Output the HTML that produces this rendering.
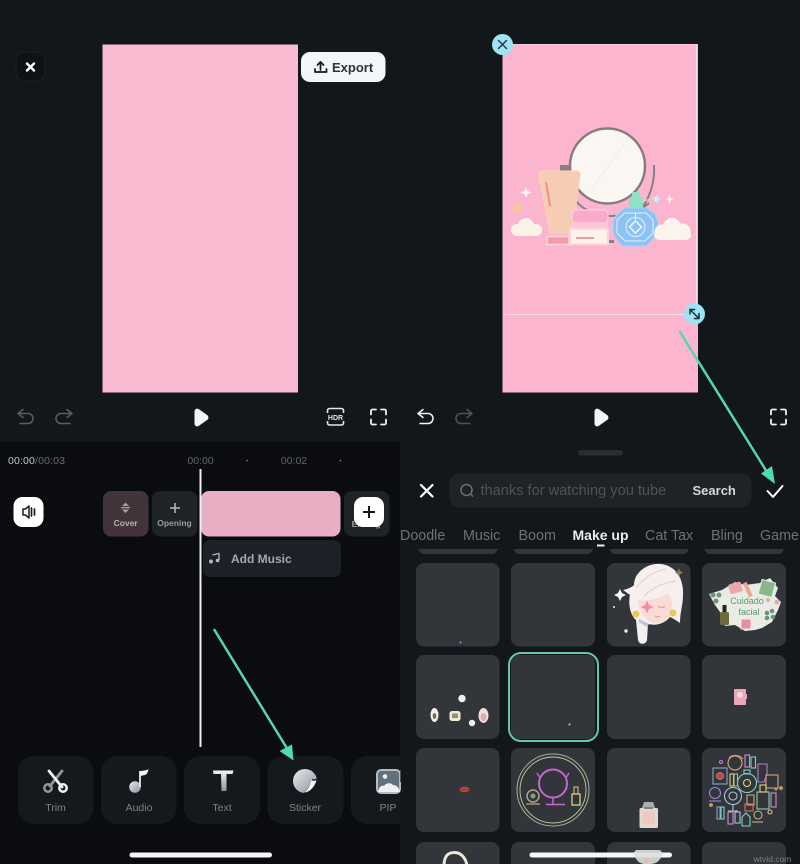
<!DOCTYPE html>
<html>
<head>
<meta charset="utf-8">
<style>
html,body{margin:0;padding:0;background:#12171b;width:800px;height:864px;overflow:hidden}
svg{display:block;position:absolute;left:0;top:0}
text{font-family:"Liberation Sans",sans-serif}
</style>
</head>
<body>
<svg width="800" height="864" viewBox="0 0 800 864" xmlns="http://www.w3.org/2000/svg">
<defs>
<linearGradient id="g1" x1="0" y1="0" x2="1" y2="1"><stop offset="0" stop-color="#e8ebee"/><stop offset="1" stop-color="#8b949c"/></linearGradient>
<linearGradient id="g2" x1="0" y1="0" x2="0" y2="1"><stop offset="0" stop-color="#f4f5f6"/><stop offset="1" stop-color="#8d959c"/></linearGradient>
</defs>
<!-- backgrounds -->
<rect width="800" height="864" fill="#12171b"/>
<rect x="0" y="442" width="400" height="422" fill="#0a0c0f"/>
<path d="M400 864V456a14 14 0 0 1 14-14H786a14 14 0 0 1 14 14V864Z" fill="#13171b"/>

<!-- LEFT TOP -->
<rect x="102.500" y="44.500" width="195.500" height="348" fill="#f9b9d1"/>
<rect x="16" y="52" width="29" height="29" rx="8" fill="#0f1215" stroke="#1c2024"/>
<path d="M27 63.500l7 7M34 63.500l-7 7" stroke="#fff" stroke-width="2.400" stroke-linecap="round"/>
<rect x="301" y="52" width="84.500" height="30" rx="9" fill="#f2f6fa"/>
<path d="M320.500 70V62.500M317.500 65l3-3.200 3 3.200M315 69v3h11.500v-3" fill="none" stroke="#15191d" stroke-width="1.700" stroke-linecap="round" stroke-linejoin="round"/>
<text x="332" y="72" font-size="13" font-weight="700" fill="#2d3237">Export</text>
<!-- undo redo left -->
<path d="M23 409.500l-5 4 5 4M18 413.500H28a5 5 0 0 1 0 10H20" fill="none" stroke="#5a5e62" stroke-width="1.500" stroke-linecap="round" stroke-linejoin="round"/>
<path d="M67 409.500l5 4-5 4M72 413.500H61a5 5 0 0 0 0 10H70" fill="none" stroke="#5a5e62" stroke-width="1.500" stroke-linecap="round" stroke-linejoin="round"/>
<path d="M195 411.500c0-2 2-3 3.500-2l8.500 6c1.300 1 1.300 3 0 4l-8.500 6c-1.500 1-3.500 0-3.500-2Z" fill="#f2f5f8" stroke="#f2f5f8" stroke-width="1"/>
<!-- HDR -->
<path d="M327.500 413v-2.500a2 2 0 0 1 2-2h12a2 2 0 0 1 2 2v2.500M327.500 421v2a2 2 0 0 0 2 2h12a2 2 0 0 0 2-2v-2" fill="none" stroke="#e4e6e8" stroke-width="1.600"/>
<text x="335.500" y="420" text-anchor="middle" font-size="7" font-weight="700" fill="#e4e6e8">HDR</text>
<path d="M371 414.500v-3.500a1.500 1.500 0 0 1 1.500-1.500h3.500M381 409.500h3.500a1.500 1.500 0 0 1 1.500 1.500v3.500M386 419.500v3.500a1.500 1.500 0 0 1-1.500 1.500H381M376 424.500h-3.500a1.500 1.500 0 0 1-1.500-1.500v-3.500" fill="none" stroke="#eef0f2" stroke-width="1.800" stroke-linecap="round"/>

<!-- RIGHT TOP -->
<rect x="502.500" y="44" width="195.500" height="348.500" fill="#fbb5cf"/>
<rect x="696" y="44" width="1" height="270" fill="#f9d9e5"/>
<rect x="502.500" y="314" width="194" height="1" fill="#f9d9e5"/>
<rect x="502.500" y="44" width="194" height="1" fill="#fcc9dc"/>
<!-- mirror -->
<path d="M654 165c1 17-4 36-18 50" fill="none" stroke="#8a7f84" stroke-width="2"/>
<path d="M576 201c6 8 20 15 35 15s28-4 38-13" fill="none" stroke="#8a7f84" stroke-width="2"/>
<path d="M560 165h12v8h-12Z" fill="#8a7f84"/>
<rect x="606" y="240" width="8" height="3" fill="#8a7f84"/>
<circle cx="607.500" cy="166" r="37.500" fill="#faf7f2" stroke="#877b7f" stroke-width="2.500"/>
<path d="M590 192l34-48" stroke="#f3efe9" stroke-width="1.500"/>
<!-- tube -->
<path d="M542 171h34c3 0 4.500 2 4 5l-8 57h-22l-11-57c-.5-3 1-5 3-5Z" fill="#f6cdb2" stroke="#f7d4bd" stroke-width="1"/>
<path d="M546 182l4 24" stroke="#ee8d95" stroke-width="2"/>
<rect x="547" y="236.500" width="22" height="8" fill="#f69ca8" stroke="#fcd7de" stroke-width="1.500"/>
<!-- jar -->
<rect x="572" y="210" width="36" height="13" rx="4" fill="#fba9cd" stroke="#fcd0e0" stroke-width="1.200"/>
<rect x="571" y="223" width="37" height="5" fill="#fbc6d8"/>
<rect x="570" y="228.500" width="38" height="16" fill="#fdf2ea" stroke="#fbd2da" stroke-width="2"/>
<rect x="576" y="237" width="18" height="2" fill="#ef9aa3"/>
<!-- perfume -->
<rect x="632" y="192" width="8" height="6" rx="1" fill="#8fe0c4"/>
<rect x="629" y="197" width="14" height="11" rx="2" fill="#8fe0c4"/>
<path d="M641 202l12-4" stroke="#e9cdd4" stroke-width="1"/>
<path d="M653 199l3.500-4 3.500 4-3.500 4Z" fill="#cfe8f6"/>
<path d="M625 208h22l8 6 3 8 0 10-5 7-7 7h-23l-7-7-3-7 0-10 4-8Z" fill="#8cc3f2" stroke="#a9d3f5" stroke-width="1"/>
<path d="M625 213h21l7 7v13l-8 8h-20l-8-8v-13Z" fill="none" stroke="#e3f1fb" stroke-width="1"/>
<circle cx="635.500" cy="227" r="9.500" fill="none" stroke="#e3f1fb" stroke-width="1"/>
<path d="M635.500 221l6 6-6 6-6-6Z" fill="none" stroke="#eff7fd" stroke-width="1.500"/>
<path d="M635.500 213v8" stroke="#e3f1fb"/>
<!-- clouds -->
<g fill="#f9f3ea"><rect x="511" y="224" width="31" height="12" rx="6"/><circle cx="526" cy="226" r="8"/><circle cx="535" cy="230" r="6"/><circle cx="517" cy="230" r="6"/></g>
<g fill="#fbf4ec"><circle cx="672" cy="227" r="9"/><circle cx="662" cy="232" r="7.500"/><circle cx="683" cy="231" r="7.500"/><rect x="654" y="230" width="37" height="10" rx="5"/></g>
<path d="M526 187l1.500 4 4 1.500-4 1.500-1.500 4-1.500-4-4-1.500 4-1.500Z" fill="#fff5f2"/>
<path d="M669.500 194l1 4 3.500 1-3.500 1-1 4-1-4-3.500-1 3.500-1Z" fill="#fff5f2"/>
<path d="M517.500 202l2.200 3.800 3.800 2.200-3.800 2.200-2.200 3.800-2.200-3.800-3.800-2.200 3.800-2.200Z" fill="#f9c88f"/>
<!-- handles -->
<circle cx="502.500" cy="44.500" r="10.500" fill="#9de4f4"/>
<path d="M498.500 40.500l8 8M506.500 40.500l-8 8" stroke="#2a3a42" stroke-width="1.500" stroke-linecap="round"/>
<circle cx="694.500" cy="314" r="10.500" fill="#9de4f4"/>
<path d="M690 309.500l9 9M690 314v-4.500h4.500M699 313.500v5h-4.500" fill="none" stroke="#1f2c33" stroke-width="1.500" stroke-linecap="round"/>
<!-- undo redo right -->
<path d="M423 409.500l-5 4 5 4M418 413.500H428a5 5 0 0 1 0 10H420" fill="none" stroke="#f0f2f4" stroke-width="1.500" stroke-linecap="round" stroke-linejoin="round"/>
<path d="M467 409.500l5 4-5 4M472 413.500H461a5 5 0 0 0 0 10H470" fill="none" stroke="#4f5357" stroke-width="1.500" stroke-linecap="round" stroke-linejoin="round"/>
<path d="M595 411.500c0-2 2-3 3.500-2l8.500 6c1.300 1 1.300 3 0 4l-8.500 6c-1.500 1-3.500 0-3.500-2Z" fill="#f2f5f8" stroke="#f2f5f8" stroke-width="1"/>
<path d="M771 414.500v-3.500a1.500 1.500 0 0 1 1.500-1.500h3.500M781 409.500h3.500a1.500 1.500 0 0 1 1.500 1.500v3.500M786 419.500v3.500a1.500 1.500 0 0 1-1.500 1.500H781M776 424.500h-3.500a1.500 1.500 0 0 1-1.500-1.500v-3.500" fill="none" stroke="#eef0f2" stroke-width="1.800" stroke-linecap="round"/>

<!-- TIMELINE -->
<text x="8" y="464" font-size="10.500" letter-spacing=".15" fill="#c3c6c8">00:00<tspan fill="#6a6e72">/00:03</tspan></text>
<text x="200.500" y="464" text-anchor="middle" font-size="10.500" fill="#63676b">00:00</text>
<text x="294" y="464" text-anchor="middle" font-size="10.500" fill="#63676b">00:02</text>
<circle cx="247" cy="460.500" r=".8" fill="#8a8d90"/>
<circle cx="340.500" cy="460.500" r=".8" fill="#8a8d90"/>
<rect x="13.500" y="497" width="30" height="30" rx="9" fill="#fff"/>
<path d="M23 509h2.500l3.500-3v12l-3.500-3H23Z" fill="none" stroke="#1b1f22" stroke-width="1.500" stroke-linejoin="round"/>
<path d="M31.500 508v8M34.500 509v6" stroke="#1b1f22" stroke-width="1.700" stroke-linecap="round"/>
<rect x="103" y="491" width="45.500" height="45.500" rx="8" fill="#43333a"/>
<path d="M122 506l3.500-3.500 3.500 3.500ZM122 509.500l3.500 3.500 3.500-3.500Z" fill="#a89da0"/>
<rect x="121" y="507" width="9" height="1.300" fill="#a89da0"/>
<text x="125.700" y="526" text-anchor="middle" font-size="8.500" font-weight="700" fill="#b9b2b4">Cover</text>
<rect x="152" y="491" width="45.500" height="45.500" rx="8" fill="#1f2327"/>
<path d="M175 503v10M170 508h10" stroke="#b8babc" stroke-width="1.500"/>
<text x="174.500" y="526" text-anchor="middle" font-size="8.500" font-weight="700" fill="#9a9da0">Opening</text>
<rect x="201" y="491" width="139.500" height="45.500" rx="8" fill="#e7aec4"/>
<rect x="203" y="540" width="138" height="37" rx="7" fill="#1d2127"/>
<path d="M212.500 555l6.500-1.500v6.500" fill="none" stroke="#b4b6b9" stroke-width="1.300"/>
<circle cx="211" cy="561.500" r="2" fill="#b4b6b9"/><circle cx="217.500" cy="560.500" r="1.800" fill="#b4b6b9"/>
<text x="231" y="563" font-size="12" font-weight="700" fill="#a5a8ab">Add Music</text>
<rect x="344" y="491" width="45.500" height="45.500" rx="8" fill="#1f2327"/>
<text x="366" y="527" text-anchor="middle" font-size="8.500" font-weight="700" fill="#9a9da0">Ending</text>
<rect x="354" y="497" width="30" height="30" rx="9" fill="#fff"/>
<path d="M369 506v12M363 512h12" stroke="#15181b" stroke-width="2"/>
<rect x="199.500" y="469" width="2" height="278" fill="#eceef0"/>

<!-- TOOLBAR -->
<rect x="18" y="756" width="75.500" height="68" rx="16" fill="#15191d"/>
<rect x="101" y="756" width="75.500" height="68" rx="16" fill="#15191d"/>
<rect x="184" y="756" width="76" height="68" rx="16" fill="#15191d"/>
<rect x="267.500" y="756" width="76" height="68" rx="16" fill="#15191d"/>
<path d="M400 756H367a16 16 0 0 0-16 16v36a16 16 0 0 0 16 16h33Z" fill="#15191d"/>
<!-- scissors -->
<path d="M62 771l-12 15" stroke="#8f979d" stroke-width="2.800" stroke-linecap="round"/>
<path d="M49 771l13 16" stroke="#f2f3f4" stroke-width="2.800" stroke-linecap="round"/>
<circle cx="48" cy="788" r="3.700" fill="none" stroke="#8f979d" stroke-width="2.500"/>
<circle cx="63" cy="788" r="3.700" fill="none" stroke="#f2f3f4" stroke-width="2.500"/>
<!-- note -->
<circle cx="135" cy="787" r="5.800" fill="url(#g1)"/>
<path d="M140 787V771" stroke="#e8eaec" stroke-width="1.800"/>
<path d="M140 771c2 0 5-.5 8.500-1.500-.5 3-2 5-3.500 5.500l-5 1Z" fill="#f1f2f3"/>
<!-- T -->
<path d="M213 770.500h20.500l-1 3.500h-6v17h-5l-.5-17h-7.500Z" fill="url(#g2)"/>
<!-- sticker -->
<circle cx="305" cy="781" r="12" fill="url(#g1)"/>
<path d="M319 776c-2 3-4 4-7 3-1 5-4 10-10 16l10 1 8-10Z" fill="#15191d"/>
<path d="M316.500 780c-2 1-3.500 1-5 0-1 5-3.500 9.500-7 12.500 5.500-.5 10.500-6 12-12.500Z" fill="#f7f7f7"/>
<!-- pip -->
<rect x="377" y="770" width="23" height="23" rx="4" fill="#63707c" stroke="#b5bbc0" stroke-width="2"/>
<circle cx="385" cy="776.500" r="2.300" fill="#f0f2f3"/>
<path d="M378 792c1-6 4-7 6-6 1.500-3 7-4 9-1 3 0 6 2 7 7Z" fill="#eef0f1"/>
<g font-size="10.500" text-anchor="middle" fill="#7e8286">
<text x="55.500" y="811">Trim</text>
<text x="139" y="811">Audio</text>
<text x="222" y="811">Text</text>
<text x="305" y="811">Sticker</text>
<text x="388" y="811">PIP</text>
</g>
<rect x="129.500" y="852.500" width="142.500" height="5" rx="2.500" fill="#f6f7f8"/>

<!-- SHEET -->
<rect x="578" y="450" width="45" height="5.500" rx="2.700" fill="#2a2e32"/>
<path d="M421 485l11.500 11.500M432.500 485L421 496.500" stroke="#fff" stroke-width="2.200" stroke-linecap="round"/>
<rect x="449.500" y="473.500" width="302" height="34" rx="10" fill="#1f2226"/>
<circle cx="466.500" cy="490" r="5.500" fill="none" stroke="#6b6f73" stroke-width="1.500"/>
<path d="M470.500 494l2.500 2.500" stroke="#6b6f73" stroke-width="1.500"/>
<text x="480.500" y="495" font-size="14.600" fill="#4f5357">thanks for watching you tube</text>
<text x="692.500" y="495" font-size="13" font-weight="700" fill="#d6d8da">Search</text>
<path d="M767.500 491l5.500 6 9.500-11" fill="none" stroke="#fff" stroke-width="2" stroke-linecap="round" stroke-linejoin="round"/>
<g font-size="14.300" fill="#6d7175">
<text x="400" y="540">Doodle</text>
<text x="463" y="540">Music</text>
<text x="518.500" y="540">Boom</text>
<text x="572.500" y="540" font-weight="700" font-size="14" fill="#e9ebec">Make up</text>
<text x="645" y="540">Cat Tax</text>
<text x="711" y="540">Bling</text>
<text x="760" y="540">Game</text>
</g>
<rect x="597" y="544.500" width="7.500" height="2" fill="#f2f3f4"/>

<!-- grid -->
<g fill="#32363a">
<path d="M418 549h80l-2 3.500a4 4 0 0 1-3 1.500H424a5 5 0 0 1-4-2Z"/>
<path d="M513 549h80l-2 3.500a4 4 0 0 1-3 1.500H519a5 5 0 0 1-4-2Z"/>
<path d="M609 549h80l-2 3.500a4 4 0 0 1-3 1.500H615a5 5 0 0 1-4-2Z"/>
<path d="M704 549h80l-2 3.500a4 4 0 0 1-3 1.500H710a5 5 0 0 1-4-2Z"/>
<rect x="416" y="563" width="83.500" height="83.500" rx="8"/>
<rect x="511" y="563" width="84" height="83.500" rx="8"/>
<rect x="607" y="563" width="83.500" height="83.500" rx="8"/>
<rect x="702" y="563" width="84" height="83.500" rx="8"/>
<rect x="416" y="655" width="83.500" height="84" rx="8"/>
<rect x="511" y="655" width="84" height="84" rx="8"/>
<rect x="607" y="655" width="83.500" height="84" rx="8"/>
<rect x="702" y="655" width="84" height="84" rx="8"/>
<rect x="416" y="748" width="83.500" height="84" rx="8"/>
<rect x="511" y="748" width="84" height="84" rx="8"/>
<rect x="607" y="748" width="83.500" height="84" rx="8"/>
<rect x="702" y="748" width="84" height="84" rx="8"/>
<path d="M416 864v-14a8 8 0 0 1 8-8h67.500a8 8 0 0 1 8 8v14Z"/>
<path d="M511 864v-14a8 8 0 0 1 8-8h68a8 8 0 0 1 8 8v14Z"/>
<path d="M607 864v-14a8 8 0 0 1 8-8h67.500a8 8 0 0 1 8 8v14Z"/>
<path d="M702 864v-14a8 8 0 0 1 8-8h68a8 8 0 0 1 8 8v14Z"/>
</g>
<rect x="509" y="653" width="89" height="88" rx="12" fill="none" stroke="#62c9ad" stroke-width="2"/>
<circle cx="460.500" cy="642.500" r="1" fill="#8aa0c8"/>
<circle cx="569.500" cy="724.500" r="1.200" fill="#7fb7a0"/>

<!-- girl sticker -->
<path d="M623 590C628 589 632 587 634 585C634 572 648 563 660 564C675 565 684 578 683 595C683 605 680 612 680 623C676 620 672 618 670 617C664 624 656 626 648 624L647 640C646 645 639 645 638 640L636 620C630 615 628 603 630 595Z" fill="#f7efed"/>
<path d="M638 600C648 602 660 598 668 593C672 598 673 604 672 610C670 618 662 624 655 623C646 622 639 612 638 600Z" fill="#f8dcd5"/>
<path d="M636 588c6-8 16-16 30-19M644 596c8-8 18-13 32-15" fill="none" stroke="#ecc9cc" stroke-width="1"/>
<path d="M647 600.500l2 4.500 4.500 2-4.500 2-2 4.500-2-4.500-4.500-2 4.500-2Z" fill="#f48ca2"/>
<path d="M658 606c2 2 5 2 7 0M655 616c2 1 4 1 5 0" fill="none" stroke="#d79a9a" stroke-width="1"/>
<circle cx="636" cy="614" r="3.500" fill="#e6cb5c"/>
<circle cx="673" cy="613" r="3.500" fill="#e6cb5c"/>
<path d="M639 619l10 5-2 3-8-5Z" fill="#b9c3da"/>
<path d="M620 589l2 4 4 2-4 2-2 4-2-4-4-2 4-2Z" fill="#f4f6f8"/>
<path d="M679 568.500l1.500 2.500 2.500 1.500-2.500 1.500-1.500 2.500-1.500-2.500-2.500-1.500 2.500-1.500Z" fill="#7c7b52"/>
<circle cx="614" cy="607" r="1" fill="#eee"/><circle cx="626" cy="631" r="1.700" fill="#eee"/>

<!-- Cuidado facial -->
<path d="M709 594L722 590L735 582L745 585L760 583L770 578L778 588L775 596L781 602L778 610L772 622L762 628L755 630L745 631L735 625L725 626L720 612L715 605Z" fill="#e8ece4"/>
<rect x="729" y="583" width="13" height="10" rx="2" fill="#e9a6ad" transform="rotate(-15 735 588)"/>
<rect x="746" y="582" width="4" height="15" fill="#eba88e" transform="rotate(-25 748 590)"/>
<rect x="760" y="581" width="14" height="15" fill="#8cb78e" stroke="#e4eee0" transform="rotate(15 767 588)"/>
<rect x="741" y="619" width="10" height="10" fill="#e58fa0" stroke="#fbe3e6"/>
<rect x="720" y="612" width="9" height="13" rx="1.500" fill="#6d6b3c"/>
<rect x="722.500" y="605" width="4" height="7" fill="#25261f"/>
<g fill="#6c9476"><circle cx="713" cy="595" r="2.500"/><circle cx="719" cy="595" r="2.500"/><circle cx="716" cy="601" r="2.500"/><circle cx="767" cy="613" r="2.300"/><circle cx="772" cy="611" r="2.300"/><circle cx="767" cy="618" r="2.300"/><circle cx="773" cy="617" r="2.300"/></g>
<text x="747" y="604" text-anchor="middle" font-size="9" fill="#5d9a6b" font-family="Liberation Serif">Cuidado</text>
<text x="749" y="615" text-anchor="middle" font-size="9" fill="#5d9a6b" font-family="Liberation Serif">facial</text>
<circle cx="777" cy="602" r="2.500" fill="#eba7a9"/>
<circle cx="768" cy="600" r="2" fill="#eba7a9"/>

<!-- nail stickers -->
<ellipse cx="434.500" cy="715" rx="4" ry="7" fill="#f1eee4"/><ellipse cx="434.500" cy="716" rx="1.800" ry="3" fill="#6b6b4e"/>
<rect x="449.500" y="711" width="11" height="10" rx="2.500" fill="#eee9d9"/><rect x="452" y="713.500" width="6" height="4.500" fill="#8c9078"/>
<ellipse cx="483.500" cy="715.500" rx="5" ry="7.500" fill="#f0dddd"/><ellipse cx="483.500" cy="717" rx="2.800" ry="4" fill="#e0a9b5"/>
<circle cx="462" cy="698.500" r="3.700" fill="#f1f1ec"/>
<circle cx="472" cy="723" r="3.200" fill="#f1f1ec"/>
<!-- mask -->
<rect x="734" y="689" width="12" height="16" rx="1" fill="#eba6bb"/><circle cx="740" cy="695" r="3" fill="#f8dce4"/><rect x="745" y="694" width="2" height="5" fill="#eba6bb"/>
<!-- lips -->
<ellipse cx="464.500" cy="789.500" rx="5" ry="2.700" fill="#b5493d"/><path d="M461 789.500h7" stroke="#7d2f2a" stroke-width=".7"/>
<!-- neon mirror -->
<circle cx="553" cy="790" r="36" fill="none" stroke="#a5b2a0" stroke-width="1"/>
<circle cx="553" cy="790" r="33" fill="none" stroke="#c8c9a0" stroke-width=".9"/>
<circle cx="553" cy="783.500" r="14" fill="none" stroke="#c565d0" stroke-width="2"/>
<path d="M553 798v6M546 804.500h19M537 773l2.500 4M569 773l-2.500 4" stroke="#c565d0" stroke-width="1.500"/>
<circle cx="533" cy="796" r="6" fill="none" stroke="#aaa78a" stroke-width="1.500"/><circle cx="533" cy="796" r="2.500" fill="#82a08a"/><path d="M526 804h14" stroke="#c69d85" stroke-width="1.300"/>
<rect x="572" y="794" width="8" height="11" fill="none" stroke="#dfcf7e" stroke-width="1.300"/><rect x="574" y="787" width="4" height="7" fill="none" stroke="#dfcf7e" stroke-width="1"/>
<!-- perfume bottle -->
<rect x="639.500" y="808" width="18.500" height="20" rx="1.500" fill="#e5d8d2"/><rect x="643" y="811.500" width="11.500" height="13" fill="#edc9bf"/>
<path d="M642 808l2-6h9l2 6Z" fill="#aeadaa"/>
<rect x="644" y="807" width="9" height="2" fill="#83817f"/>
<!-- neon collage -->
<g fill="none" stroke-width="1.100">
<rect x="713" y="768" width="14" height="16" stroke="#7ea7c9"/><circle cx="720" cy="776" r="3.500" stroke="#d9645f" fill="#b2524f"/>
<circle cx="735" cy="763" r="7" stroke="#d9a27a"/><path d="M729 758c4-4 11-3 14 1" stroke="#d9a27a"/>
<rect x="745" y="755" width="4.500" height="12" stroke="#d98ac9"/><rect x="751" y="757" width="4.500" height="11" stroke="#7bd3c6"/>
<path d="M758 764h9v10l-3 8h-6Z" stroke="#b97ac9"/>
<rect x="766" y="775" width="12" height="13" stroke="#d9a27a"/>
<circle cx="747" cy="783" r="9.500" stroke="#7bd3c6"/><circle cx="747" cy="783" r="3.500" stroke="#e6cf7e"/><rect x="744" y="770" width="6" height="4" stroke="#7bd3c6"/>
<rect x="730" y="774" width="3.500" height="12" stroke="#e6cf7e"/><rect x="734" y="774" width="3.500" height="12" stroke="#9fc36d"/>
<circle cx="715" cy="793" r="5.500" stroke="#9f85d9"/><path d="M709 801h12" stroke="#9f85d9"/>
<circle cx="733" cy="796" r="8.500" stroke="#a9c3e0"/><circle cx="733" cy="796" r="4" stroke="#a9c3e0"/><path d="M733 804.500v6M728 811h10" stroke="#a9c3e0"/>
<rect x="757" y="792" width="12" height="17" stroke="#7bd3a8"/><rect x="760" y="785" width="6" height="7" stroke="#e6cf7e"/>
<rect x="771" y="793" width="5" height="14" stroke="#d98ac9"/>
<rect x="747" y="795" width="7" height="10" stroke="#d9a27a"/><rect x="745" y="804" width="8" height="7" stroke="#d96f5f"/>
<rect x="717" y="807" width="3" height="12" stroke="#7ea7c9"/><rect x="721" y="807" width="3" height="12" stroke="#7bd3c6"/>
<rect x="728" y="812" width="5" height="12" stroke="#d98ac9"/><rect x="735" y="812" width="5" height="11" stroke="#a9c3e0"/>
<path d="M742 817l4-4 4 4v9h-8Z" stroke="#7bd3c6"/>
<circle cx="758" cy="815" r="4" stroke="#c9ad7e"/><path d="M752 822h11" stroke="#c9ad7e"/>
<circle cx="770" cy="812" r="2" stroke="#d9c87e"/>
<circle cx="721" cy="762" r="1.500" stroke="#c97ad9"/><circle cx="776" cy="789" r="1" stroke="#d9a27a"/><circle cx="781" cy="788" r="1.200" stroke="#e6cf7e"/><circle cx="711" cy="805" r="1.200" stroke="#e6cf7e"/>
</g>
<!-- bottom row items -->
<path d="M444 866C444 856 448 852.500 454.500 852.500S466 858 467 866" fill="none" stroke="#ece6d6" stroke-width="3"/>
<rect x="529.500" y="852.500" width="142.500" height="5" rx="2.500" fill="#f6f7f8"/>
<path d="M636 850h23c2 0 3 2 3 3 0 5-4 11-12 11h-5c-8 0-11-8-11-12Z" fill="#dededa" opacity=".9"/>
<circle cx="647" cy="861" r="2" fill="#e9b9b5"/>
<rect x="400" y="770" width="1" height="12" fill="#4a5054"/>
<text x="772.500" y="862" font-size="8.500" fill="#7c8084" text-anchor="middle">wtvid.com</text>

<!-- ARROWS -->
<path d="M214.500 630L288 750" stroke="#58d6ae" stroke-width="2.500" stroke-linecap="round"/>
<path d="M293.500 760.500l-14-9.500 12.500-6.500Z" fill="#4fdcb0"/>
<path d="M680 332L767 472" stroke="#58d6ae" stroke-width="2.500" stroke-linecap="round"/>
<path d="M775 484l-14-10.500 11-7.500Z" fill="#4fdcb0"/>
</svg>
</body>
</html>
